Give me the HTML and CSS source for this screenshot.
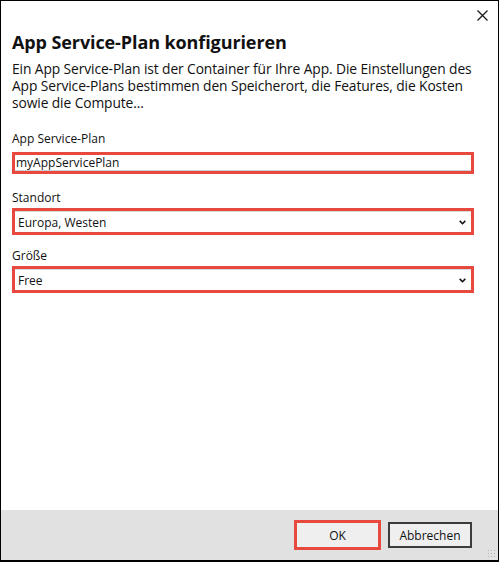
FILE: index.html
```html
<!DOCTYPE html>
<html lang="de">
<head>
  <meta charset="UTF-8" />
  <meta name="viewport" content="width=device-width, initial-scale=1.0" />
  <title>App Service-Plan konfigurieren</title>
  <link rel="stylesheet" href="styles.css">
</head>
<body>
  <div class="dialog">
    <div class="titlebar">
      <button class="close" aria-label="Schließen">
        <svg width="11" height="11" viewBox="0 0 11 11">
          <path d="M0.5 0.5 L10.5 10.5 M10.5 0.5 L0.5 10.5" stroke="#1a1a1a" stroke-width="1.3" fill="none" />
        </svg>
      </button>
    </div>

    <main class="content">
      <h1 class="heading">App Service-Plan konfigurieren</h1>
      <p class="intro">Ein App Service-Plan ist der Container für Ihre App. Die Einstellungen des App Service-Plans bestimmen den Speicherort, die Features, die Kosten sowie die Compute...</p>

      <div class="field field-first">
        <label class="field-label" for="plan">App Service-Plan</label>
        <div class="marked">
          <input class="text-input" id="plan" type="text" value="myAppServicePlan" />
        </div>
      </div>

      <div class="field">
        <label class="field-label">Standort</label>
        <div class="marked">
          <div class="combo">
            <span>Europa, Westen</span>
            <svg class="chevron" width="7" height="5" viewBox="0 0 7 5">
              <path d="M0.7 0.9 L3.5 3.7 L6.3 0.9" stroke="#111" stroke-width="1.6" fill="none" />
            </svg>
          </div>
        </div>
      </div>

      <div class="field field-last">
        <label class="field-label">Größe</label>
        <div class="marked">
          <div class="combo">
            <span>Free</span>
            <svg class="chevron" width="7" height="5" viewBox="0 0 7 5">
              <path d="M0.7 0.9 L3.5 3.7 L6.3 0.9" stroke="#111" stroke-width="1.6" fill="none" />
            </svg>
          </div>
        </div>
      </div>
    </main>

    <footer class="actions">
      <div class="marked marked-btn">
        <button class="btn">OK</button>
      </div>
      <button class="btn btn-default">Abbrechen</button>
      <span class="grip"></span>
    </footer>
  </div>
</body>
</html>
```

FILE: styles.css
```css
/* --- reset ------------------------------------------------------------ */
* {
  margin: 0;
  padding: 0;
  box-sizing: border-box;
}

:root {
  --mark: #e8493f;
  --text: #111;
  --footer: #e1e1e1;
}

html, body {
  height: 100%;
  background: #fff;
  font-family: "Open Sans", "Noto Sans", sans-serif;
  color: var(--text);
}

/* --- window ----------------------------------------------------------- */
.dialog {
  width: 499px;
  height: 562px;
  border: 1px solid #000;
  border-bottom-width: 2px;
  display: flex;
  flex-direction: column;
  background: #fff;
}

.titlebar {
  height: 28px;
  display: flex;
  justify-content: flex-end;
  align-items: flex-start;
}

.close {
  border: 0;
  background: none;
  width: 30px;
  height: 26px;
  display: flex;
  align-items: center;
  justify-content: center;
  margin-top: 1px;
  margin-right: 1px;
}

/* --- body ------------------------------------------------------------- */
.content {
  padding: 0 24px 0 11px;
  flex: 1;
}

.heading {
  font-size: 18px;
  font-weight: 700;
  line-height: 26px;
  letter-spacing: -0.1px;
}

.intro {
  font-size: 13.8px;
  line-height: 17px;
  margin-top: 5px;
  margin-right: -4px;
  letter-spacing: -0.1px;
}

.field {
  margin-top: 15px;
}

.field-first {
  margin-top: 19px;
}

.field-last {
  margin-top: 12px;
}

.field-label {
  display: block;
  font-size: 12px;
  line-height: 18px;
  margin-bottom: 1px;
}

.field-first .field-label {
  margin-bottom: 4px;
}

/* red highlight rectangles from the annotated screenshot */
.marked {
  border: 3px solid var(--mark);
}

.text-input {
  display: block;
  width: 100%;
  height: 16px;
  border: 0;
  border-bottom: 1px solid #cfcfcf;
  font: inherit;
  font-size: 12px;
  padding: 0 0 0 1px;
  color: var(--text);
  outline: none;
}

.combo {
  height: 21px;
  border-top: 1px solid #d9d9d9;
  display: flex;
  align-items: center;
  justify-content: space-between;
  padding: 0 5px 0 3px;
  font-size: 12px;
}

.chevron {
  display: block;
}

/* --- footer ----------------------------------------------------------- */
.actions {
  height: 50px;
  background: var(--footer);
  display: flex;
  align-items: center;
  justify-content: flex-end;
  gap: 7px;
  padding-right: 26px;
  position: relative;
}

.btn {
  font: inherit;
  font-size: 12px;
  height: 26px;
  background: #efefef;
  border: 1px solid #adadad;
  color: var(--text);
}

.marked-btn .btn {
  display: block;
  width: 81px;
  height: 24px;
  border: 0;
}

.btn-default {
  width: 84px;
  border: 2px solid #3c3c3c;
}

.grip {
  position: absolute;
  right: 1px;
  bottom: 1px;
  width: 10px;
  height: 10px;
  background-image: radial-gradient(circle, #b4b4b4 0.8px, transparent 1px);
  background-size: 3px 3px;
}
```
